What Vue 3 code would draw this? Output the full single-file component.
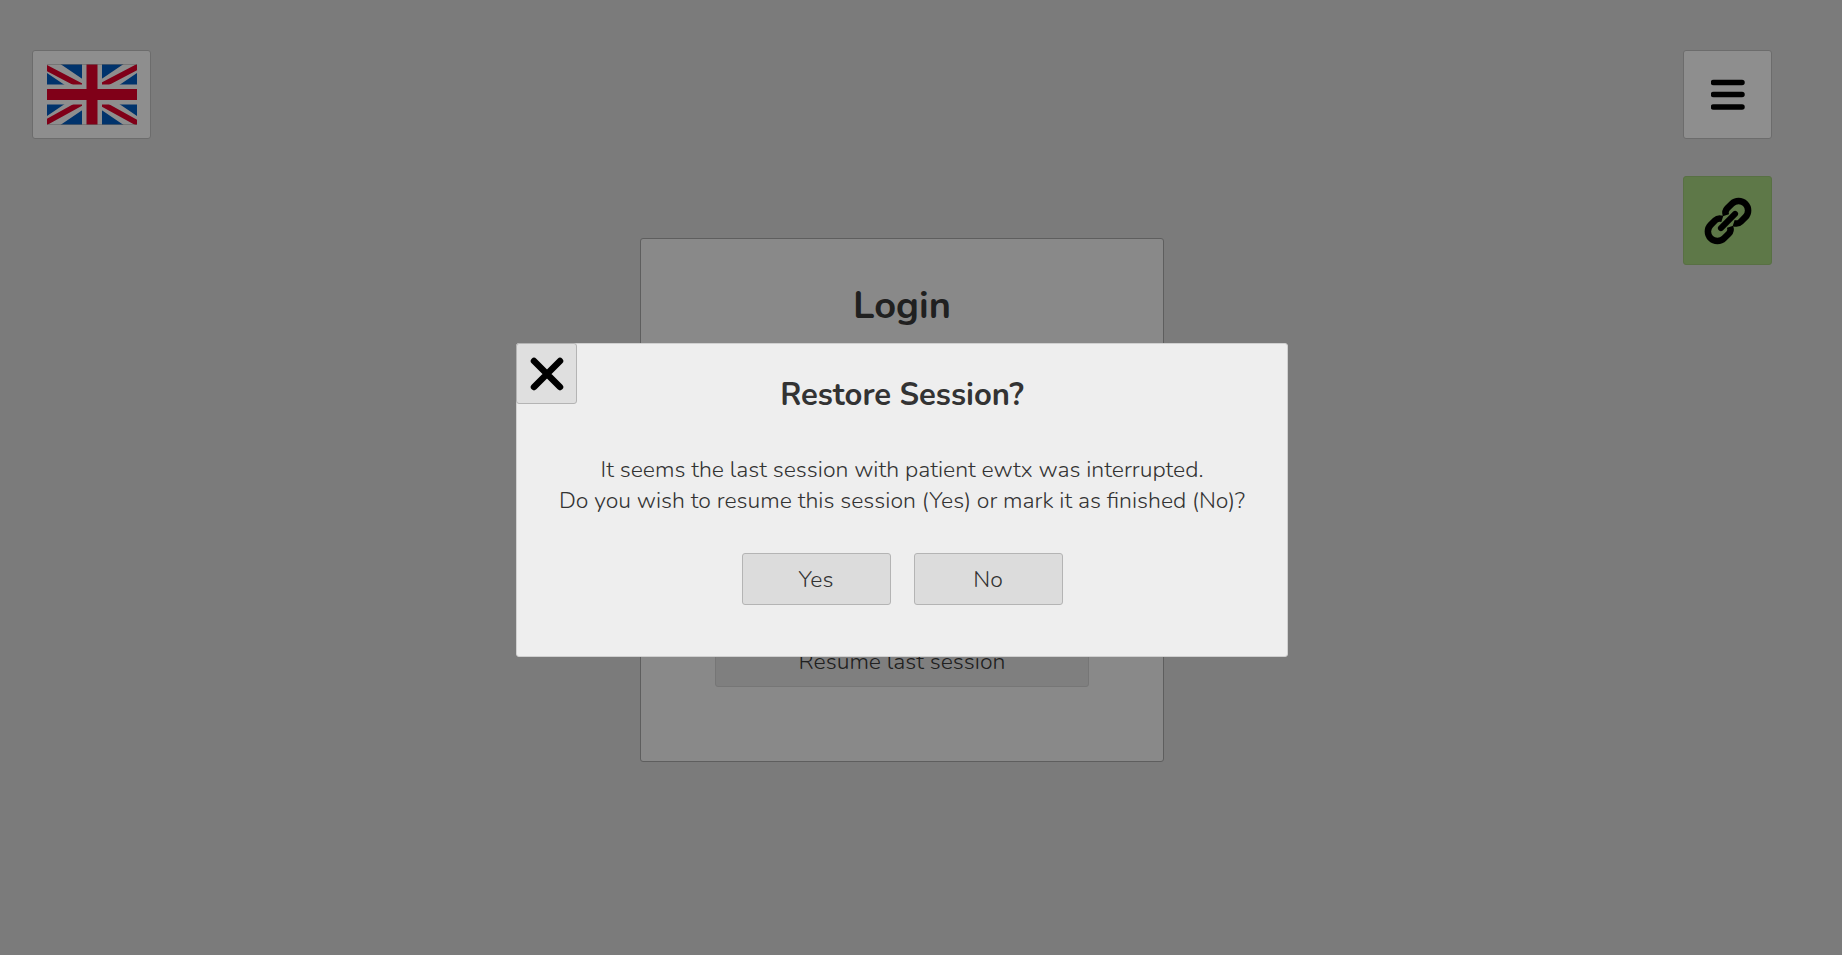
<script setup>
import { ref } from 'vue'

const patient = ref('ewtx')
</script>

<template>
  <div class="page">
    <header class="side">
      <button class="tile flag-tile" type="button" aria-label="English">
        <svg class="flag" viewBox="0 0 90 61" preserveAspectRatio="none" aria-hidden="true">
          <rect width="90" height="61" fill="#00336c" />
          <path d="M0 0L90 61M90 0L0 61" stroke="#8e8e8e" stroke-width="15" />
          <path d="M-2 3L36 23M92 2L54 22M-2 59L36 38M92 60L54 39" stroke="#800018" stroke-width="5.500" />
          <path d="M45 0V61M0 30.500H90" stroke="#8e8e8e" stroke-width="20" />
          <path d="M45 0V61M0 30.500H90" stroke="#800018" stroke-width="11" />
          <path d="M0 .5H90M0 60.500H90" stroke="#666" stroke-opacity=".6" />
        </svg>
      </button>
    </header>

    <main class="login">
      <h1>Login</h1>
      <button class="resume" type="button">Resume last session</button>
    </main>

    <nav class="side tools" aria-label="Tools">
      <button class="tile" type="button" aria-label="Menu">
        <svg width="34" height="32" viewBox="0 0 34 32" aria-hidden="true">
          <path d="M2.500 3.500H31M2.500 15.500H31M2.500 28H31" stroke="#000" stroke-width="5.500" stroke-linecap="round" />
        </svg>
      </button>
      <button class="tile linked" type="button" aria-label="Connection">
        <svg width="48" height="48" viewBox="0 0 48 48" fill="none" stroke="#000" aria-hidden="true">
          <g transform="rotate(-45 24 24)" stroke-width="6.500">
            <path d="M21.500 18.500Q19.500 14.500 15.500 14.500H9A9.500 9.500 0 0 0 9 33.500H15.500Q19.500 33.500 21.500 29.500" />
            <path d="M26.500 18.500Q28.500 14.500 32.500 14.500H39A9.500 9.500 0 0 1 39 33.500H32.500Q28.500 33.500 26.500 29.500" />
            <path d="M14 24H34" stroke-width="6" stroke-linecap="round" />
          </g>
        </svg>
      </button>
    </nav>

    <div class="overlay">
      <section class="dialog" role="dialog" aria-modal="true" aria-labelledby="dialog-title">
        <button class="close" type="button" aria-label="Close">
          <svg width="34" height="34" viewBox="0 0 34 34" aria-hidden="true">
            <path d="M4 4L30 30M30 4L4 30" stroke="#000" stroke-width="6.500" stroke-linecap="round" />
          </svg>
        </button>
        <h2 id="dialog-title">Restore Session?</h2>
        <p>
          It seems the last session with patient {{ patient }} was interrupted.<br />
          Do you wish to resume this session (Yes) or mark it as finished (No)?
        </p>
        <div class="actions">
          <button type="button">Yes</button>
          <button type="button">No</button>
        </div>
      </section>
    </div>
  </div>
</template>

<style>
body {
  margin: 0;
  background: #7b7b7b;
}
</style>

<style scoped>
.page {
  box-sizing: border-box;
  display: grid;
  grid-template-columns: 1fr auto 1fr;
  min-height: 100vh;
  padding: 45px 70px 0 32px;
  font-family: Nunito, Lato, sans-serif;
  font-size: 23px;
  font-weight: 340;
  color: #333;
}

button {
  display: flex;
  align-items: center;
  justify-content: center;
  box-sizing: border-box;
  padding: 0;
  border: 1px solid #b4b4b4;
  border-radius: 3px;
  background: #dcdcdc;
  color: inherit;
  font: inherit;
  cursor: pointer;
}

h1,
h2,
p {
  margin: 0;
  text-align: center;
}

.side {
  padding-top: 5px;
}

.tools {
  display: flex;
  flex-direction: column;
  align-items: flex-end;
  gap: 37px;
}

.tile {
  width: 89px;
  height: 89px;
  border-color: #6c6c6c;
  background: #8e8e8e;
}

.flag-tile {
  width: 119px;
}

.flag {
  width: 90px;
  height: 61px;
}

.linked {
  border-color: #587043;
  background: #5e7848;
}

.login {
  box-sizing: border-box;
  display: flex;
  flex-direction: column;
  justify-content: space-between;
  align-self: center;
  width: 524px;
  min-height: 524px;
  padding: 43px 74px 74px;
  border: 1px solid #5e5e5e;
  border-radius: 3px;
  background: #898989;
  color: #202020;
}

h1 {
  font-size: 38px;
  line-height: 48px;
}

.resume {
  width: 100%;
  height: 52px;
  border-color: #767676;
  background: #7f7f7f;
  color: #202020;
}

.overlay {
  position: fixed;
  inset: 0;
  display: flex;
  align-items: center;
  justify-content: center;
  padding: 45px 38px 0 0;
}

.dialog {
  position: relative;
  box-sizing: border-box;
  width: 772px;
  padding: 32px 0 51px;
  border: 1px solid #d0d0d0;
  border-radius: 3px;
  background: #eee;
}

.close {
  position: absolute;
  top: -1px;
  left: -1px;
  width: 61px;
  height: 61px;
  background: #dfdfdf;
}

h2 {
  color: #333;
  font-size: 31px;
  line-height: 38px;
}

p {
  margin-top: 40px;
  line-height: 31px;
}

.actions {
  display: flex;
  justify-content: center;
  gap: 23px;
  margin-top: 37px;
}

.actions button {
  width: 149px;
  height: 52px;
}
</style>
